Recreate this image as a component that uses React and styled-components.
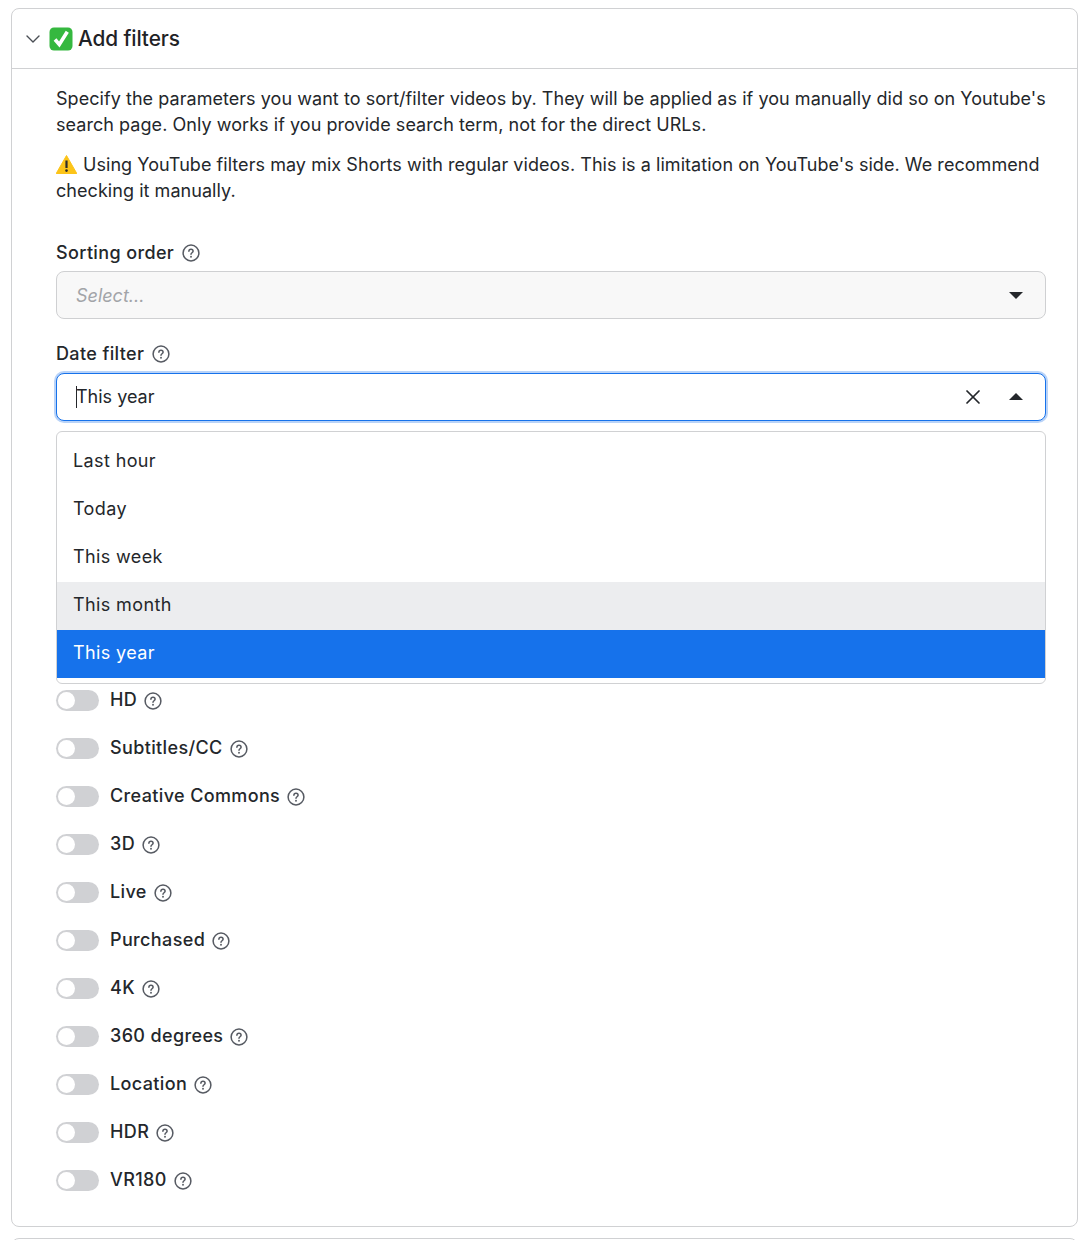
import styled, { createGlobalStyle } from "styled-components";
import { ChevronDown, X } from "lucide-react";

const switches = [
  "HD",
  "Subtitles/CC",
  "Creative Commons",
  "3D",
  "Live",
  "Purchased",
  "4K",
  "360 degrees",
  "Location",
  "HDR",
  "VR180",
];

const dateOptions = ["Last hour", "Today", "This week", "This month", "This year"];

const GlobalStyle = createGlobalStyle`
  html, body {
    margin: 0;
    background: #fff;
    overflow: hidden;
  }
  body {
    font-family: Inter, "Liberation Sans", sans-serif;
    color: #24272b;
    -webkit-font-smoothing: antialiased;
  }
`;

const Page = styled.div`
  height: 1240px;
  padding: 8px 12px 0 11px;
  box-sizing: border-box;
`;

const Panel = styled.section`
  border: 1px solid #d0d1d3;
  border-radius: 8px;
  background: #fff;
  height: 1219px;
  box-sizing: border-box;
`;

const NextPanel = styled.div`
  margin-top: 11px;
  height: 20px;
  border: 1px solid #d0d1d3;
  border-radius: 8px;
`;

const PanelHeader = styled.header`
  display: flex;
  align-items: center;
  height: 59px;
  padding-left: 9px;
  border-bottom: 1px solid #d0d1d3;
  font-size: 20.8px;
  font-weight: 500;
  letter-spacing: -0.1px;
  color: #1f2226;

  svg.chevron {
    color: #4a4e54;
    margin-right: 4px;
  }
`;

const HeaderEmoji = styled.svg`
  width: 24px;
  height: 24px;
  margin-right: 5px;
`;

const PanelBody = styled.div`
  padding: 17px 31px 0 44px;
`;

const Paragraphs = styled.div`
  margin-right: -4px;
  margin-bottom: 36px;
`;

const Paragraph = styled.p`
  margin: 0 0 14px;
  font-size: 18px;
  line-height: 26px;
  letter-spacing: 0.05px;

  &:last-child {
    margin-bottom: 0;
  }
`;

const WarningEmoji = styled.svg`
  width: 21px;
  height: 19px;
  vertical-align: -3px;
  margin-right: 6px;
`;

const Field = styled.div`
  position: relative;
  margin-bottom: ${(p) => p.$gap}px;
`;

const FieldLabel = styled.div`
  display: flex;
  align-items: center;
  height: 24px;
  margin-bottom: 7px;
  font-size: 18px;
  font-weight: 500;
  letter-spacing: 0.37px;
  color: #24272b;
`;

const HelpIcon = styled.svg`
  width: 18px;
  height: 18px;
  margin-left: 8px;
  margin-top: 2px;
  flex: none;
  color: #565a62;
`;

const SelectBox = styled.div`
  display: flex;
  align-items: center;
  height: 48px;
  box-sizing: border-box;
  margin-top: ${(p) => (p.$focused ? "8px" : "0")};
  padding: 0 22px ${(p) => (p.$focused ? "1px" : "0")} 19px;
  border-radius: 8px;
  font-size: 18px;
  border: 1px solid ${(p) => (p.$focused ? "#1672eb" : "#cfd0d2")};
  background: ${(p) => (p.$focused ? "#fff" : "#f8f8f8")};
  box-shadow: ${(p) => (p.$focused ? "0 0 0 2px #b9d3f8" : "none")};
`;

const SelectValue = styled.span`
  flex: 1;
  display: flex;
  align-items: center;
  color: ${(p) => (p.$placeholder ? "#a2a4a8" : "#24272b")};
  font-style: ${(p) => (p.$placeholder ? "italic" : "normal")};
`;

const Caret = styled.span`
  width: 1px;
  height: 22px;
  margin-right: -1px;
  background: #24272b;
`;

const Triangle = styled.span`
  width: 0;
  height: 0;
  border-left: 7px solid transparent;
  border-right: 7px solid transparent;
  border-top: ${(p) => (p.$up ? "0" : "7px solid #24272b")};
  border-bottom: ${(p) => (p.$up ? "7px solid #24272b" : "0")};
`;

const ClearButton = styled.span`
  display: flex;
  margin-right: 24px;
  color: #24272b;
`;

const Menu = styled.ul`
  position: absolute;
  z-index: 2;
  top: 90px;
  left: 0;
  right: 0;
  margin: 0;
  padding: 6px 0 5px;
  list-style: none;
  background: #fff;
  border: 1px solid #d0d1d3;
  border-radius: 6px;
`;

const MenuItem = styled.li`
  height: 48px;
  display: flex;
  align-items: center;
  padding-left: 16px;
  padding-bottom: 3px;
  box-sizing: border-box;
  font-size: 18px;
  letter-spacing: 0.38px;
  background: ${(p) => (p.$selected ? "#1672eb" : p.$hovered ? "#ecedef" : "transparent")};
  color: ${(p) => (p.$selected ? "#fff" : "#24272b")};
`;

const SwitchList = styled.div`
  display: flex;
  flex-direction: column;
  padding-top: 255px;
`;

const SwitchRow = styled.label`
  display: flex;
  align-items: center;
  height: 48px;
  padding-bottom: 1px;
  box-sizing: border-box;
  font-size: 18px;
  font-weight: 500;
  letter-spacing: 0.37px;

  svg {
    margin-left: 7px;
    margin-top: 3px;
  }
`;

const Toggle = styled.span`
  display: flex;
  align-items: center;
  width: 43px;
  height: 21px;
  margin-top: 1px;
  margin-right: 11px;
  padding-left: 2px;
  box-sizing: border-box;
  border-radius: 11px;
  background: #d0d1d4;

  &::before {
    content: "";
    width: 17px;
    height: 17px;
    border-radius: 50%;
    background: #fff;
  }
`;

const Help = () => (
  <HelpIcon viewBox="0 0 18 18" fill="none">
    <circle cx="9" cy="9" r="7.9" stroke="currentColor" strokeWidth="1.5" />
    <path
      d="M6.9 7.2a2.1 2.1 0 0 1 4.2.1c0 1.3-2.1 1.6-2.1 2.9"
      stroke="currentColor"
      strokeWidth="1.5"
      strokeLinecap="round"
    />
    <circle cx="9" cy="12.8" r="0.95" fill="currentColor" />
  </HelpIcon>
);

const App = () => {
  return (
    <Page>
      <GlobalStyle />
      <Panel>
        <PanelHeader>
          <ChevronDown className="chevron" size={24} strokeWidth={1.4} />
          <HeaderEmoji viewBox="0 0 24 24">
            <rect x="0.5" y="0.5" width="23" height="23" rx="4.5" fill="#35b83f" />
            <path d="M6 12.5l4.3 5L18.3 4.8" fill="none" stroke="#fff" strokeWidth="3.6" />
          </HeaderEmoji>
          Add filters
        </PanelHeader>
        <PanelBody>
          <Paragraphs>
            <Paragraph>
              Specify the parameters you want to sort/filter videos by. They will be applied as if
              you manually did so on Youtube's search page. Only works if you provide search term,
              not for the direct URLs.
            </Paragraph>
            <Paragraph>
              <WarningEmoji viewBox="0 0 21 19">
                <path d="M10.5 0.5L20.8 18.5H0.2z" fill="#fcc419" stroke="#fcc419" strokeLinejoin="round" />
                <path d="M10.5 5.5v7.5" stroke="#2b2b2b" strokeWidth="2.2" />
                <circle cx="10.5" cy="15.6" r="1.3" fill="#2b2b2b" />
              </WarningEmoji>
              Using YouTube filters may mix Shorts with regular videos. This is a limitation on
              YouTube's side. We recommend checking it manually.
            </Paragraph>
          </Paragraphs>
          <Field $gap={22}>
            <FieldLabel>
              Sorting order
              <Help />
            </FieldLabel>
            <SelectBox>
              <SelectValue $placeholder>Select...</SelectValue>
              <Triangle />
            </SelectBox>
          </Field>
          <Field $gap={0}>
            <FieldLabel>
              Date filter
              <Help />
            </FieldLabel>
            <SelectBox $focused>
              <SelectValue>
                <Caret />
                This year
              </SelectValue>
              <ClearButton>
                <X size={24} strokeWidth={1.7} />
              </ClearButton>
              <Triangle $up />
            </SelectBox>
            <Menu>
              {dateOptions.map((option) => (
                <MenuItem
                  key={option}
                  $hovered={option === "This month"}
                  $selected={option === "This year"}
                >
                  {option}
                </MenuItem>
              ))}
            </Menu>
          </Field>
          <SwitchList>
            {switches.map((name) => (
              <SwitchRow key={name}>
                <Toggle />
                {name}
                <Help />
              </SwitchRow>
            ))}
          </SwitchList>
        </PanelBody>
      </Panel>
      <NextPanel />
    </Page>
  );
};

export default App;
